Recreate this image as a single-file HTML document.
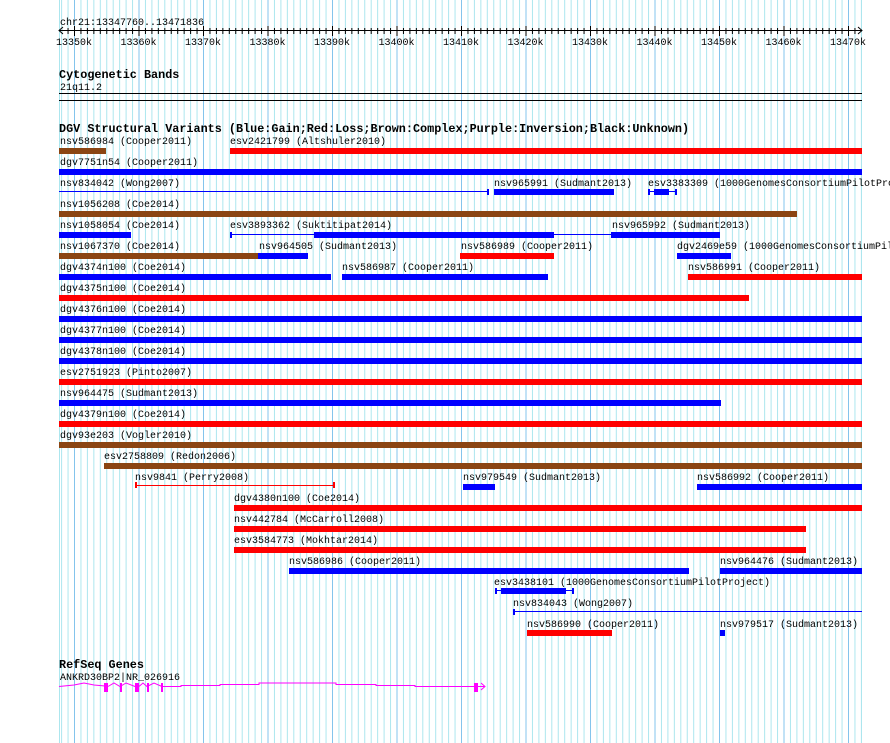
<!DOCTYPE html><html><head><style>body{margin:0;background:#fff}svg{display:block}text{font-family:"Liberation Mono",monospace;font-size:10px;fill:#000}.b{font-weight:bold;font-size:11.8px}</style></head><body>
<svg width="890" height="743" xmlns="http://www.w3.org/2000/svg">
<defs>
<pattern id="lg" x="74" y="0" width="6.45" height="743" patternUnits="userSpaceOnUse"><rect x="0" y="0" width="1" height="743" fill="#ace6ee"/></pattern>
<pattern id="dg" x="74" y="0" width="64.5" height="743" patternUnits="userSpaceOnUse"><rect x="0" y="0" width="1" height="743" fill="#84c4ec"/></pattern>
<pattern id="tk" x="74" y="0" width="6.45" height="743" patternUnits="userSpaceOnUse"><rect x="0" y="28" width="1" height="6" fill="#000"/></pattern>
<pattern id="tkd" x="74" y="0" width="64.5" height="743" patternUnits="userSpaceOnUse"><rect x="0" y="26" width="1" height="10" fill="#000"/></pattern>
</defs>
<rect x="59" y="0" width="803" height="743" fill="url(#lg)"/>
<rect x="59" y="0" width="803" height="743" fill="url(#dg)"/>
<rect x="59" y="0" width="1" height="743" fill="#ace6ee"/>
<rect x="861" y="0" width="1" height="743" fill="#ace6ee"/>
<text x="60" y="25">chr21:13347760..13471836</text>
<rect x="59" y="30" width="803" height="1" fill="#000"/>
<rect x="62" y="28" width="798" height="6" fill="url(#tk)"/>
<rect x="62" y="26" width="798" height="10" fill="url(#tkd)"/>
<path d="M63 27 L59 30.5 L63 34 M858 27 L862 30.5 L858 34" stroke="#000" fill="none"/>
<g text-anchor="middle">
<text x="74" y="45">13350k</text><text x="138.5" y="45">13360k</text><text x="203" y="45">13370k</text><text x="267.5" y="45">13380k</text><text x="332" y="45">13390k</text><text x="396.5" y="45">13400k</text><text x="461" y="45">13410k</text><text x="525.5" y="45">13420k</text><text x="590" y="45">13430k</text><text x="654.5" y="45">13440k</text><text x="719" y="45">13450k</text><text x="783.5" y="45">13460k</text><text x="848" y="45">13470k</text>
</g>
<text class="b" x="59" y="78">Cytogenetic Bands</text>
<text x="60" y="90">21q11.2</text>
<rect x="59" y="93" width="803" height="1" fill="#000"/>
<rect x="59" y="100" width="803" height="1" fill="#000"/>
<text class="b" x="59" y="132">DGV Structural Variants (Blue:Gain;Red:Loss;Brown:Complex;Purple:Inversion;Black:Unknown)</text>
<text x="60" y="144">nsv586984 (Cooper2011)</text><text x="230" y="144">esv2421799 (Altshuler2010)</text>
<text x="60" y="165">dgv7751n54 (Cooper2011)</text>
<text x="60" y="186">nsv834042 (Wong2007)</text><text x="494" y="186">nsv965991 (Sudmant2013)</text><text x="648" y="186">esv3383309 (1000GenomesConsortiumPilotProject)</text>
<text x="60" y="207">nsv1056208 (Coe2014)</text>
<text x="60" y="228">nsv1058054 (Coe2014)</text><text x="230" y="228">esv3893362 (Suktitipat2014)</text><text x="612" y="228">nsv965992 (Sudmant2013)</text>
<text x="60" y="249">nsv1067370 (Coe2014)</text><text x="259" y="249">nsv964505 (Sudmant2013)</text><text x="461" y="249">nsv586989 (Cooper2011)</text><text x="677" y="249">dgv2469e59 (1000GenomesConsortiumPilotProject)</text>
<text x="60" y="270">dgv4374n100 (Coe2014)</text><text x="342" y="270">nsv586987 (Cooper2011)</text><text x="688" y="270">nsv586991 (Cooper2011)</text>
<text x="60" y="291">dgv4375n100 (Coe2014)</text>
<text x="60" y="312">dgv4376n100 (Coe2014)</text>
<text x="60" y="333">dgv4377n100 (Coe2014)</text>
<text x="60" y="354">dgv4378n100 (Coe2014)</text>
<text x="60" y="375">esv2751923 (Pinto2007)</text>
<text x="60" y="396">nsv964475 (Sudmant2013)</text>
<text x="60" y="417">dgv4379n100 (Coe2014)</text>
<text x="60" y="438">dgv93e203 (Vogler2010)</text>
<text x="104" y="459">esv2758809 (Redon2006)</text>
<text x="135" y="480">nsv9841 (Perry2008)</text><text x="463" y="480">nsv979549 (Sudmant2013)</text><text x="697" y="480">nsv586992 (Cooper2011)</text>
<text x="234" y="501">dgv4380n100 (Coe2014)</text>
<text x="234" y="522">nsv442784 (McCarroll2008)</text>
<text x="234" y="543">esv3584773 (Mokhtar2014)</text>
<text x="289" y="564">nsv586986 (Cooper2011)</text><text x="720" y="564">nsv964476 (Sudmant2013)</text>
<text x="494" y="585">esv3438101 (1000GenomesConsortiumPilotProject)</text>
<text x="513" y="606">nsv834043 (Wong2007)</text>
<text x="527" y="627">nsv586990 (Cooper2011)</text><text x="720" y="627">nsv979517 (Sudmant2013)</text>
<g>
<rect x="59" y="148" width="47" height="6" fill="#8b4513"/><rect x="230" y="148" width="632" height="6" fill="#f00"/>
<rect x="59" y="169" width="803" height="6" fill="#00f"/>
<rect x="59" y="191" width="429" height="1" fill="#00f"/><rect x="487" y="189" width="2" height="6" fill="#00f"/>
<rect x="494" y="189" width="120" height="6" fill="#00f"/>
<rect x="648" y="191" width="28" height="1" fill="#00f"/><rect x="648" y="189" width="2" height="6" fill="#00f"/><rect x="675" y="189" width="2" height="6" fill="#00f"/><rect x="654" y="189" width="15" height="6" fill="#00f"/>
<rect x="59" y="211" width="738" height="6" fill="#8b4513"/>
<rect x="59" y="232" width="72" height="6" fill="#00f"/>
<rect x="230" y="234" width="381" height="1" fill="#00f"/><rect x="230" y="232" width="2" height="6" fill="#00f"/>
<rect x="314" y="232" width="240" height="6" fill="#00f"/><rect x="611" y="232" width="109" height="6" fill="#00f"/>
<rect x="59" y="253" width="199" height="6" fill="#8b4513"/><rect x="258" y="253" width="50" height="6" fill="#00f"/><rect x="460" y="253" width="94" height="6" fill="#f00"/><rect x="677" y="253" width="54" height="6" fill="#00f"/>
<rect x="59" y="274" width="272" height="6" fill="#00f"/><rect x="342" y="274" width="206" height="6" fill="#00f"/><rect x="688" y="274" width="174" height="6" fill="#f00"/>
<rect x="59" y="295" width="690" height="6" fill="#f00"/>
<rect x="59" y="316" width="803" height="6" fill="#00f"/>
<rect x="59" y="337" width="803" height="6" fill="#00f"/>
<rect x="59" y="358" width="803" height="6" fill="#00f"/>
<rect x="59" y="379" width="803" height="6" fill="#f00"/>
<rect x="59" y="400" width="662" height="6" fill="#00f"/>
<rect x="59" y="421" width="803" height="6" fill="#f00"/>
<rect x="59" y="442" width="803" height="6" fill="#8b4513"/>
<rect x="104" y="463" width="758" height="6" fill="#8b4513"/>
<rect x="135" y="485" width="200" height="1" fill="#f00"/><rect x="135" y="482" width="2" height="6" fill="#f00"/><rect x="333" y="482" width="2" height="6" fill="#f00"/>
<rect x="463" y="484" width="32" height="6" fill="#00f"/><rect x="697" y="484" width="165" height="6" fill="#00f"/>
<rect x="234" y="505" width="628" height="6" fill="#f00"/>
<rect x="234" y="526" width="572" height="6" fill="#f00"/>
<rect x="234" y="547" width="572" height="6" fill="#f00"/>
<rect x="289" y="568" width="400" height="6" fill="#00f"/><rect x="720" y="568" width="142" height="6" fill="#00f"/>
<rect x="495" y="590" width="79" height="1" fill="#00f"/><rect x="495" y="588" width="2" height="6" fill="#00f"/><rect x="572" y="588" width="2" height="6" fill="#00f"/><rect x="501" y="588" width="65" height="6" fill="#00f"/>
<rect x="513" y="611" width="349" height="1" fill="#00f"/><rect x="513" y="609" width="2" height="6" fill="#00f"/>
<rect x="527" y="630" width="85" height="6" fill="#f00"/><rect x="720" y="630" width="5" height="6" fill="#00f"/>
</g>
<text class="b" x="59" y="668">RefSeq Genes</text>
<text x="60" y="680">ANKRD30BP2|NR_026916</text>
<g stroke="#f0f" fill="none" stroke-width="1">
<polyline points="59,686.5 74,685 79,684 84,683 89,684 94,685 105,686"/>
<polyline points="108,686.5 114,683 120,686.5 126,683 135,686.5"/>
<polyline points="139,686.5 143,683 147,686.5 154,683 162,686.5"/>
<polyline points="162,686.5 181,686.5 181,685.5 220,685.5 220,684.5 259,684.5 259,683 298,683 298,683 336,683 336,684.5 376,684.5 376,685.5 415,685.5 415,686.5 454,686.5 454,686.5 484,686.5"/>
<polyline points="481,683 485,686.5 481,690"/>
</g>
<g fill="#f0f">
<rect x="104" y="683" width="4" height="9"/><rect x="120" y="683" width="2" height="9"/><rect x="135" y="683" width="4" height="9"/><rect x="147" y="683" width="2" height="9"/><rect x="161" y="683" width="2" height="9"/><rect x="474" y="683" width="4" height="9"/>
</g>
</svg>
</body></html>
